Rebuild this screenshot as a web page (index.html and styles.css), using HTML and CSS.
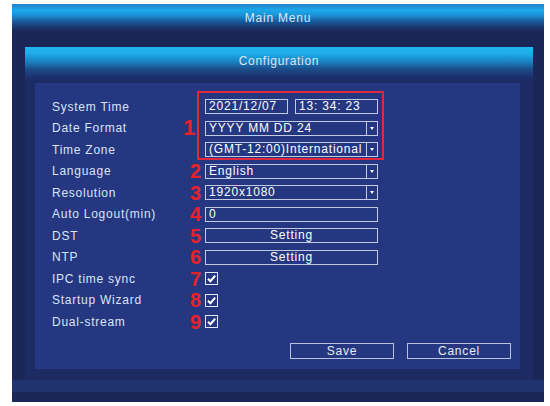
FILE: index.html
```html
<!DOCTYPE html>
<html>
<head>
<meta charset="utf-8">
<link rel="stylesheet" href="styles.css">
</head>
<body>
<div class="screen">
  <div class="main-header">Main Menu</div>
  <div class="main-body">
    <div class="config">
      <div class="config-header">Configuration</div>
      <div class="content">
        <div class="form">
          <div class="label">System Time</div>
          <div class="num"></div>
          <div class="ctrl pair">
            <div class="field half">2021/12/07</div>
            <div class="field half">13: 34: 23</div>
          </div>

          <div class="label">Date Format</div>
          <div class="num num-one">1</div>
          <div class="ctrl">
            <div class="field select"><span class="val">YYYY MM DD 24</span><span class="arrow"></span></div>
          </div>

          <div class="label">Time Zone</div>
          <div class="num"></div>
          <div class="ctrl">
            <div class="field select"><span class="val">(GMT-12:00)International</span><span class="arrow"></span></div>
          </div>

          <div class="label">Language</div>
          <div class="num">2</div>
          <div class="ctrl">
            <div class="field select"><span class="val">English</span><span class="arrow"></span></div>
          </div>

          <div class="label">Resolution</div>
          <div class="num">3</div>
          <div class="ctrl">
            <div class="field select"><span class="val">1920x1080</span><span class="arrow"></span></div>
          </div>

          <div class="label">Auto Logout(min)</div>
          <div class="num">4</div>
          <div class="ctrl">
            <div class="field">0</div>
          </div>

          <div class="label">DST</div>
          <div class="num">5</div>
          <div class="ctrl">
            <div class="field center">Setting</div>
          </div>

          <div class="label">NTP</div>
          <div class="num">6</div>
          <div class="ctrl">
            <div class="field center">Setting</div>
          </div>

          <div class="label">IPC time sync</div>
          <div class="num">7</div>
          <div class="ctrl">
            <span class="check"><svg viewBox="0 0 13 13" width="13" height="13"><path d="M3 6.8 L5.4 9.2 L10.2 3.6" fill="none" stroke="#ffffff" stroke-width="2"/></svg></span>
          </div>

          <div class="label">Startup Wizard</div>
          <div class="num">8</div>
          <div class="ctrl">
            <span class="check"><svg viewBox="0 0 13 13" width="13" height="13"><path d="M3 6.8 L5.4 9.2 L10.2 3.6" fill="none" stroke="#ffffff" stroke-width="2"/></svg></span>
          </div>

          <div class="label">Dual-stream</div>
          <div class="num">9</div>
          <div class="ctrl">
            <span class="check"><svg viewBox="0 0 13 13" width="13" height="13"><path d="M3 6.8 L5.4 9.2 L10.2 3.6" fill="none" stroke="#ffffff" stroke-width="2"/></svg></span>
          </div>
        </div>

        <div class="actions">
          <button class="btn">Save</button>
          <button class="btn">Cancel</button>
        </div>

        <div class="highlight"></div>
      </div>
    </div>
    <div class="band"></div>
  </div>
</div>
</body>
</html>
```

FILE: styles.css
```css
html, body {
  margin: 0;
  padding: 0;
  background: #ffffff;
  font-family: "Liberation Sans", Arial, sans-serif;
}

.screen {
  margin: 4px 0 0 12px;
  width: 532px;
  height: 398px;
  background: #1b2758;
  display: flex;
  flex-direction: column;
}

.main-header {
  height: 28px;
  flex: none;
  background: linear-gradient(#2182c6 0%, #1ba8ea 22%, #1a93d6 40%, #1a5a9c 62%, #1b3468 85%, #1b2758 100%);
  color: #dfe6f4;
  font-size: 12px;
  letter-spacing: 0.8px;
  text-align: center;
  line-height: 28px;
}

.main-body {
  flex: 1;
  padding: 15px 11px 0 13px;
  display: flex;
  flex-direction: column;
}

.config {
  height: 333px;
  flex: none;
  background: #1c2b63;
  display: flex;
  flex-direction: column;
}

.config-header {
  height: 33px;
  flex: none;
  background: linear-gradient(#22b6f0 0%, #1eaeea 18%, #1a86c8 42%, #1b4f8c 66%, #1c3370 88%, #1c2b63 100%);
  color: #dfe6f4;
  font-size: 12px;
  letter-spacing: 0.7px;
  text-align: center;
  line-height: 29px;
}

.content {
  position: relative;
  margin: 3px 13px 0 10px;
  height: 286px;
  box-sizing: border-box;
  background: #243780;
  padding: 13px 0 0 17px;
}

.form {
  display: grid;
  grid-template-columns: 131px 22px 173px;
  grid-auto-rows: 21.5px;
  align-items: center;
}

.label {
  color: #dce3f6;
  font-size: 12px;
  letter-spacing: 0.75px;
  white-space: nowrap;
}

.num {
  color: #e8222a;
  font-weight: bold;
  font-size: 20px;
  line-height: 1;
  text-align: right;
  padding-right: 4px;
}

.num-one {
  text-align: left;
  font-size: 22px;
  padding-right: 0;
}

.ctrl {
  display: flex;
  align-items: center;
}

.pair {
  gap: 7px;
}

.field {
  flex: 1;
  height: 15px;
  box-sizing: border-box;
  border: 1px solid #c3cbe2;
  color: #ffffff;
  font-size: 12px;
  letter-spacing: 0.8px;
  line-height: 13px;
  padding-left: 3px;
  white-space: nowrap;
  overflow: hidden;
}

.half {
  flex: none;
  width: 83px;
}

.center {
  text-align: center;
  padding-left: 0;
}

.select {
  display: flex;
  padding-left: 0;
}

.select .val {
  flex: 1;
  overflow: hidden;
  padding-left: 3px;
}

.select .arrow {
  flex: none;
  width: 10px;
  border-left: 1px solid #c3cbe2;
  display: flex;
  align-items: center;
  justify-content: center;
}

.select .arrow::after {
  content: "";
  border-left: 2px solid transparent;
  border-right: 2px solid transparent;
  border-top: 3px solid #ffffff;
}

.check {
  width: 13px;
  height: 13px;
  box-sizing: border-box;
  border: 1px solid #e3e8f6;
  display: flex;
  align-items: center;
  justify-content: center;
}

.check svg {
  display: block;
  flex: none;
}

.actions {
  display: flex;
  justify-content: flex-end;
  gap: 13px;
  margin-top: 10px;
  padding-right: 9px;
}

.btn {
  width: 104px;
  height: 16px;
  box-sizing: border-box;
  border: 1px solid #b9c3dd;
  background: transparent;
  color: #e6ebf7;
  font-family: "Liberation Sans", Arial, sans-serif;
  font-size: 12px;
  letter-spacing: 0.8px;
  line-height: 14px;
  padding: 0;
  text-align: center;
}

.highlight {
  position: absolute;
  left: 162px;
  top: 8px;
  width: 187px;
  height: 69px;
  box-sizing: border-box;
  border: 2px solid #e0283f;
  pointer-events: none;
}

.band {
  height: 12px;
  background: #21336f;
  margin-left: -13px;
  margin-right: -11px;
}
```
